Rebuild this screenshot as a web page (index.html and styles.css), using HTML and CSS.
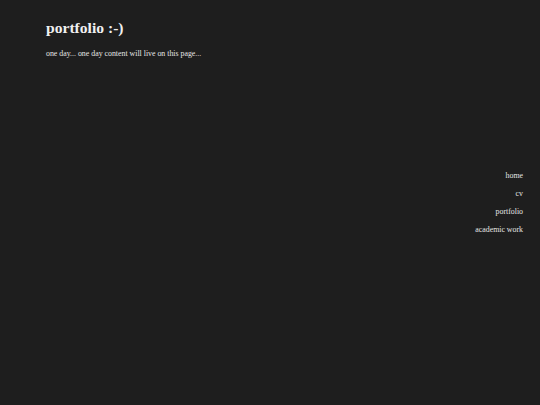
FILE: index.html
```html
<!DOCTYPE html>
<html>
<head>
<meta charset="utf-8">
<link rel="stylesheet" href="styles.css">
</head>
<body>
<div class="page">
  <header class="intro">
    <h1 class="title">portfolio :-)</h1>
    <p class="blurb">one day... one day content will live on this page...</p>
  </header>
  <nav class="nav">
    <a class="nav-link" href="#">home</a>
    <a class="nav-link" href="#">cv</a>
    <a class="nav-link" href="#">portfolio</a>
    <a class="nav-link" href="#">academic work</a>
  </nav>
</div>
</body>
</html>
```
FILE: styles.css
```css
html, body {
  margin: 0;
  padding: 0;
  background: #1e1e1e;
  height: 100%;
}
body {
  font-family: "Liberation Serif", "Times New Roman", serif;
  color: #e6e6e6;
}
.page {
  padding: 18px 17px 0 46px;
  display: flex;
  flex-direction: column;
}
.title {
  margin: 0;
  font-size: 15.6px;
  font-weight: bold;
  line-height: 20px;
  color: #f0f0f0;
}
.blurb {
  margin: 11px 0 0 0;
  font-size: 7.85px;
  line-height: 10px;
}
.nav {
  margin-top: 112px;
  display: flex;
  flex-direction: column;
  align-items: flex-end;
  gap: 8px;
}
.nav-link {
  color: #e6e6e6;
  text-decoration: none;
  font-size: 7.85px;
  line-height: 10px;
}
```
